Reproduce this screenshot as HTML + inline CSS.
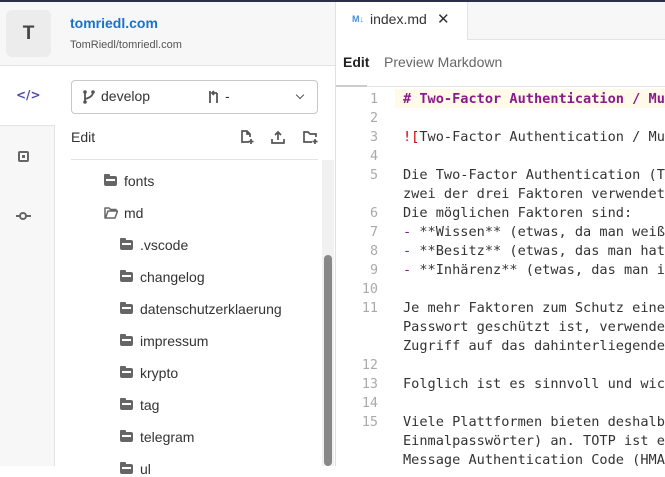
<!DOCTYPE html>
<html><head><meta charset="utf-8"><style>
*{margin:0;padding:0;box-sizing:border-box}
body{width:665px;height:466px;overflow:hidden;background:#fff;font-family:"Liberation Sans",Roboto,sans-serif;position:relative;color:#333}
.a{position:absolute}
.code{font-family:"DejaVu Sans Mono",monospace;font-size:13.6px;color:#333;white-space:pre;line-height:19px}
.ln{font-family:"DejaVu Sans Mono",monospace;font-size:13.4px;color:#aaa;width:42px;text-align:right;line-height:19px}
.ti{position:absolute;font-size:14px;color:#333;display:flex;align-items:center}
.fd{width:13px;height:10px;background:#666;border-radius:1px 2px 2px 2px;margin-right:7px;position:relative}
.fd:before{content:"";position:absolute;left:2px;right:2px;top:3px;height:2px;background:#fff}
.fd:after{content:"";position:absolute;left:0;top:-2px;width:6px;height:3px;background:#666;border-radius:1px 1px 0 0}
.m{color:#8b1a8b}
</style></head><body>
<div class="a" style="left:0;top:0;width:665px;height:2px;background:#2b2f4a"></div>
<div class="a" style="left:0;top:2px;width:335px;height:64px;background:#f7f7f7;border-bottom:1px solid #e3e3e3"></div>
<div class="a" style="left:6px;top:10px;width:45px;height:47px;background:#ececec;border-radius:6px;font-size:19px;font-weight:bold;color:#444;display:flex;align-items:center;justify-content:center">T</div>
<div class="a" style="left:70px;top:15px;font-size:14px;font-weight:bold;color:#1a73c8">tomriedl.com</div>
<div class="a" style="left:70px;top:39px;font-size:11px;color:#555">TomRiedl/tomriedl.com</div>
<div class="a" style="left:0;top:125px;width:55px;height:341px;background:#f7f7f7;border-right:1px solid #e3e3e3;border-top:1px solid #e3e3e3"></div>
<div class="a" style="left:16px;top:88px;font-size:12px;font-weight:bold;color:#4a4ab0;font-family:'DejaVu Sans',sans-serif">&lt;/&gt;</div>
<div class="a" style="left:18px;top:151px;width:11px;height:11px;border:2px solid #666;border-radius:2px"></div>
<div class="a" style="left:22px;top:155px;width:3px;height:3px;background:#666"></div>
<div class="a" style="left:16px;top:215px;width:15px;height:2px;background:#666"></div>
<div class="a" style="left:19px;top:212px;width:8px;height:8px;border:2px solid #666;border-radius:50%;background:#f7f7f7"></div>
<div class="a" style="left:71px;top:80px;width:247px;height:34px;border:1px solid #c8c8c8;border-radius:4px"></div>
<svg class="a" style="left:82px;top:89px" width="14" height="16" viewBox="0 0 14 16"><circle cx="3" cy="3" r="1.8" fill="#555"/><circle cx="3" cy="13" r="1.8" fill="#555"/><circle cx="11" cy="3" r="1.8" fill="#555"/><path d="M3 3V13M11 3Q11 8 3 10" stroke="#555" stroke-width="1.8" fill="none"/></svg>
<div class="a" style="left:101px;top:88px;font-size:14px;color:#333">develop</div>
<svg class="a" style="left:207px;top:89px" width="16" height="16" viewBox="0 0 16 16"><path d="M3 2V14M10 4V14M10 4H6M7 2L5 4L7 6" stroke="#555" stroke-width="1.8" fill="none"/></svg>
<div class="a" style="left:225px;top:88px;font-size:14px;color:#333">-</div>
<div class="a" style="left:297px;top:92px;width:6px;height:6px;border-right:1.5px solid #555;border-bottom:1.5px solid #555;transform:rotate(45deg)"></div>
<div class="a" style="left:71px;top:129px;font-size:14px;color:#333">Edit</div>
<svg class="a" style="left:239px;top:129px" width="16" height="16" viewBox="0 0 16 16"><path d="M10 13H3V2H8L11 5V8M8 2V5H11M12 10V15M9.5 12.5H14.5" stroke="#555" stroke-width="1.7" fill="none"/></svg>
<svg class="a" style="left:270px;top:129px" width="16" height="16" viewBox="0 0 16 16"><path d="M2 10V14H14V10M8 11V3M5 6L8 3L11 6" stroke="#555" stroke-width="1.7" fill="none"/></svg>
<svg class="a" style="left:302px;top:129px" width="17" height="16" viewBox="0 0 17 16"><path d="M10 13H2V3H6L8 5H14V8M13 10V15M10.5 12.5H15.5" stroke="#555" stroke-width="1.7" fill="none"/></svg>
<div class="a" style="left:71px;top:159px;width:247px;height:1px;background:#e3e3e3"></div>
<div class="a" style="left:322px;top:160px;width:12px;height:306px;background:#f1f1f1"></div>
<div class="a" style="left:324px;top:255px;width:8px;height:211px;background:#888;border-radius:4px"></div>
<div class="ti" style="left:104px;top:173px"><div class="fd"></div>fonts</div>
<svg class="a" style="left:104px;top:207px" width="14" height="12" viewBox="0 0 14 12"><path d="M1 1H5L6.5 2.5H12V4H4L1.5 11H1ZM1.5 11L4 4H13.5L11 11Z" stroke="#666" stroke-width="1.5" fill="none" stroke-linejoin="round"/></svg>
<div class="ti" style="left:124px;top:205px">md</div>
<div class="ti" style="left:120px;top:237px"><div class="fd"></div>.vscode</div>
<div class="ti" style="left:120px;top:269px"><div class="fd"></div>changelog</div>
<div class="ti" style="left:120px;top:301px"><div class="fd"></div>datenschutzerklaerung</div>
<div class="ti" style="left:120px;top:333px"><div class="fd"></div>impressum</div>
<div class="ti" style="left:120px;top:365px"><div class="fd"></div>krypto</div>
<div class="ti" style="left:120px;top:397px"><div class="fd"></div>tag</div>
<div class="ti" style="left:120px;top:429px"><div class="fd"></div>telegram</div>
<div class="ti" style="left:120px;top:461px"><div class="fd"></div>ul</div>
<div class="a" style="left:335px;top:2px;width:1px;height:464px;background:#e0e0e0"></div>
<div class="a" style="left:467px;top:2px;width:198px;height:38px;background:#f7f7f7;border-left:1px solid #e3e3e3;border-bottom:1px solid #e3e3e3"></div>
<div class="a" style="left:352px;top:14px;font-size:9px;font-weight:bold;color:#4a90d9">M↓</div>
<div class="a" style="left:370px;top:11px;font-size:14px;color:#333">index.md</div>
<div class="a" style="left:437px;top:10px;font-size:15px;color:#333">✕</div>
<div class="a" style="left:343px;top:54px;font-size:14px;font-weight:bold;color:#222">Edit</div>
<div class="a" style="left:384px;top:54px;font-size:14px;color:#666">Preview Markdown</div>
<div class="a" style="left:336px;top:86px;width:329px;height:1px;background:#e3e3e3"></div>
<div class="a" style="left:336px;top:85px;width:31px;height:2px;background:#ccc"></div>
<div class="a" style="left:395px;top:89px;width:270px;height:19px;background:#fffbe8"></div>
<div class="a" style="left:336px;top:90px">
<div class="ln">1<br>2<br>3<br>4<br>5<br><br>6<br>7<br>8<br>9<br>10<br>11<br><br><br>12<br>13<br>14<br>15</div>
</div>
<div class="a code" style="left:403px;top:90px"><b class="m"># Two-Factor Authentication / Multi</b>

<span style="color:#c00">![</span>Two-Factor Authentication / Multi

Die Two-Factor Authentication (TFA)
zwei der drei Faktoren verwendet wer
Die möglichen Faktoren sind:
<span class="m">-</span> **Wissen** (etwas, da man weiß)
<span class="m">-</span> **Besitz** (etwas, das man hat)
<span class="m">-</span> **Inhärenz** (etwas, das man ist)

Je mehr Faktoren zum Schutz eines
Passwort geschützt ist, verwendet
Zugriff auf das dahinterliegende

Folglich ist es sinnvoll und wichtig

Viele Plattformen bieten deshalb
Einmalpasswörter) an. TOTP ist ein
Message Authentication Code (HMAC)</div>
</body></html>
